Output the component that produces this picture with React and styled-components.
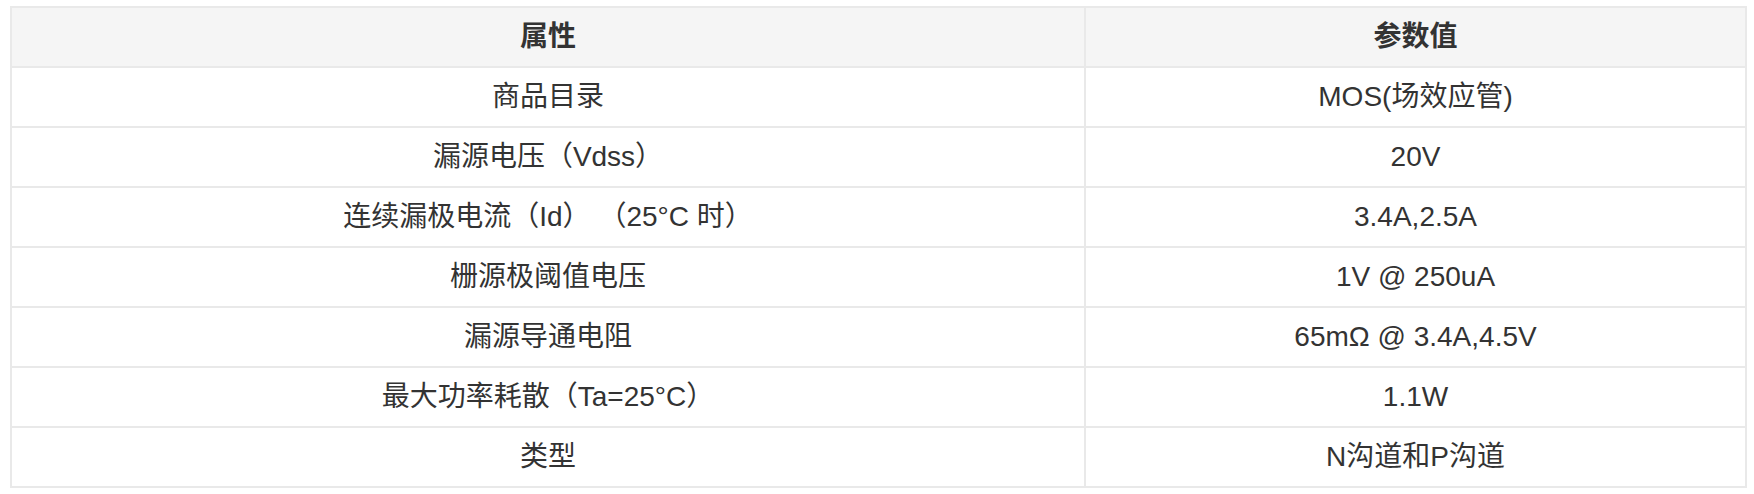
import styled, { createGlobalStyle } from "styled-components";

const GlobalStyle = createGlobalStyle`
  body {
    margin: 0;
    background: #ffffff;
    font-family: "Liberation Sans", "Noto Sans CJK SC", sans-serif;
  }
`;

const Wrapper = styled.div`
  padding: 6px 0 0 10px;
`;

const Table = styled.table`
  border-collapse: separate;
  border-spacing: 0;
  border-top: 2px solid #e9e9e9;
  border-left: 2px solid #e9e9e9;
  font-size: 28px;
  color: #333333;
`;

const Head = styled.th`
  width: ${(p) => p.$width}px;
  padding: 0;
  line-height: 58px;
  text-align: center;
  font-weight: 700;
  background: #f5f5f5;
  border-right: 2px solid #e9e9e9;
  border-bottom: 2px solid #e9e9e9;
`;

const Cell = styled.td`
  padding: 0;
  line-height: 58px;
  text-align: center;
  font-weight: 400;
  white-space: pre;
  border-right: 2px solid #e9e9e9;
  border-bottom: 2px solid #e9e9e9;
`;

const rows = [
  ["商品目录", "MOS(场效应管)"],
  ["漏源电压（Vdss）", "20V"],
  ["连续漏极电流（Id） （25°C 时）", "3.4A,2.5A"],
  ["栅源极阈值电压", "1V @ 250uA"],
  ["漏源导通电阻", "65mΩ @ 3.4A,4.5V"],
  ["最大功率耗散（Ta=25°C）", "1.1W"],
  ["类型", "N沟道和P沟道"],
];

const App = () => {
  return (
    <>
      <GlobalStyle />
      <Wrapper>
        <Table>
          <thead>
            <tr>
              <Head $width={1072}>属性</Head>
              <Head $width={659}>参数值</Head>
            </tr>
          </thead>
          <tbody>
            {rows.map(([name, value]) => (
              <tr key={name}>
                <Cell>{name}</Cell>
                <Cell>{value}</Cell>
              </tr>
            ))}
          </tbody>
        </Table>
      </Wrapper>
    </>
  );
};

export default App;
